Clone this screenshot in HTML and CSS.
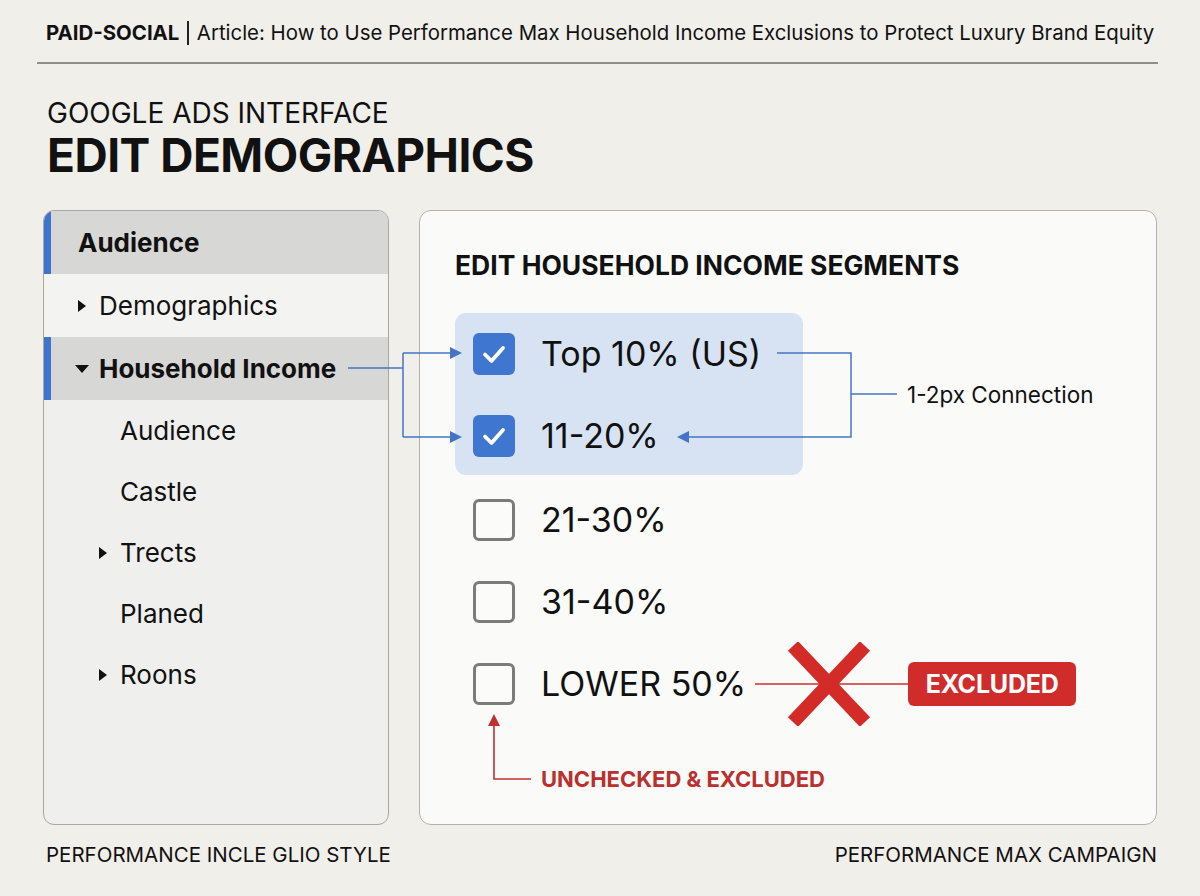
FILE: index.html
```html
<!DOCTYPE html>
<html lang="en">
<head>
    <meta charset="UTF-8">
    <meta name="viewport" content="width=device-width, initial-scale=1.0">
    <title>Edit Demographics</title>
    <link rel="stylesheet" href="styles.css">
</head>
<body>
    <div class="page">
        <div class="topline">
            <span class="channel">PAID-SOCIAL</span>
            <span class="divider"></span>
            <span class="article">Article: How to Use Performance Max Household Income Exclusions to Protect Luxury Brand Equity</span>
        </div>
        <div class="rule"></div>

        <div class="heading">
            <div class="kicker">GOOGLE ADS INTERFACE</div>
            <h1>EDIT DEMOGRAPHICS</h1>
        </div>

        <div class="workspace">
            <div class="sidebar">
                <div class="nav-row section">Audience</div>
                <div class="nav-row caret-row"><span class="caret right"></span>Demographics</div>
                <div class="nav-row section caret-row"><span class="caret down"></span>Household Income</div>
                <div class="nav-row sub"><span class="caret"></span>Audience</div>
                <div class="nav-row sub"><span class="caret"></span>Castle</div>
                <div class="nav-row sub"><span class="caret right"></span>Trects</div>
                <div class="nav-row sub"><span class="caret"></span>Planed</div>
                <div class="nav-row sub"><span class="caret right"></span>Roons</div>
            </div>

            <div class="panel">
                <h2>EDIT HOUSEHOLD INCOME SEGMENTS</h2>

                <div class="selected-group">
                    <div class="selected-box">
                        <div class="option">
                            <span class="check on"><svg viewBox="0 0 42 42"><path d="M12 21.5l6.5 6.5 11.5-13"/></svg></span>
                            <span class="option-label">Top 10% (US)</span>
                        </div>
                        <div class="option">
                            <span class="check on"><svg viewBox="0 0 42 42"><path d="M12 21.5l6.5 6.5 11.5-13"/></svg></span>
                            <span class="option-label">11-20%</span>
                        </div>
                    </div>
                    <div class="annotation">1-2px Connection</div>
                </div>

                <div class="option-list">
                    <div class="option">
                        <span class="check"></span>
                        <span class="option-label">21-30%</span>
                    </div>
                    <div class="option">
                        <span class="check"></span>
                        <span class="option-label">31-40%</span>
                    </div>
                    <div class="option">
                        <span class="check"></span>
                        <span class="option-label">LOWER 50%</span>
                        <svg class="strike" width="153" height="84" viewBox="0 0 153 84">
                            <line x1="0" y1="42" x2="153" y2="42" stroke="#c8302e" stroke-width="1.6"/>
                            <line x1="38" y1="4" x2="110" y2="80" stroke="#d32b28" stroke-width="14"/>
                            <line x1="110" y1="4" x2="38" y2="80" stroke="#d32b28" stroke-width="14"/>
                        </svg>
                        <span class="badge">EXCLUDED</span>
                    </div>
                </div>

                <div class="note">UNCHECKED &amp; EXCLUDED</div>
            </div>

            <!-- connector lines between the nav, the checkboxes and the notes -->
            <svg class="connectors" width="1114" height="615" viewBox="0 0 1114 615">
                <g fill="none" stroke="#4475c4" stroke-width="1.5">
                    <path d="M305 158H360"/>
                    <path d="M360 143V227"/>
                    <path d="M360 143H410"/>
                    <path d="M360 227H410"/>
                    <path d="M734 143H808V227H644"/>
                    <path d="M808 184H854"/>
                </g>
                <g fill="#4475c4">
                    <path d="M419 143l-12-6v12z"/>
                    <path d="M419 227l-12-6v12z"/>
                    <path d="M634 227l12-6v12z"/>
                </g>
                <path d="M451 513V569H488" fill="none" stroke="#c0302e" stroke-width="1.6"/>
                <path d="M451 504l-6 12h12z" fill="#c0302e"/>
            </svg>
        </div>

        <div class="footer">
            <span>PERFORMANCE INCLE GLIO STYLE</span>
            <span>PERFORMANCE MAX CAMPAIGN</span>
        </div>
    </div>
</body>
</html>
```

FILE: styles.css
```css
* {
    margin: 0;
    padding: 0;
    box-sizing: border-box;
}

body {
    background-color: #f1efea;
    color: #111;
    font-family: Inter, "Noto Sans", sans-serif;
}

.page {
    width: 1121px;
    margin-left: 37px;
    padding-top: 21px;
}

.topline {
    display: flex;
    align-items: center;
    padding-left: 9px;
    font-size: 20.4px;
    line-height: 24px;
    white-space: nowrap;
}

.channel {
    font-weight: 700;
}

.divider {
    width: 1.5px;
    height: 24px;
    background-color: #222;
    margin: 0 8px;
}

.rule {
    height: 2px;
    background-color: #8f8e8a;
    margin-top: 17px;
}

.heading {
    padding-left: 10px;
    margin-top: 33px;
}

.kicker {
    font-size: 28px;
    line-height: 32px;
}

h1 {
    font-size: 46px;
    line-height: 52px;
    font-weight: 700;
    letter-spacing: -0.5px;
}

.workspace {
    position: relative;
    display: flex;
    gap: 30px;
    width: 1114px;
    height: 615px;
    margin: 29px 0 0 6px;
}

/* left navigation */
.sidebar {
    width: 346px;
    background-color: #efefee;
    border: 1px solid #a8a8a6;
    border-radius: 11px;
    overflow: hidden;
}

.nav-row {
    display: flex;
    align-items: center;
    height: 63px;
    padding-left: 34px;
    font-size: 26px;
    background-color: #f3f3f2;
}

.nav-row.section {
    background-color: #d7d7d6;
    font-weight: 700;
    box-shadow: inset 7px 0 0 #3e74cc;
}

.nav-row.caret-row {
    padding-left: 31px;
}

.nav-row.sub {
    height: 61px;
    padding-left: 52px;
    background-color: transparent;
}

.caret {
    display: flex;
    align-items: center;
    justify-content: center;
    width: 14px;
    height: 14px;
    margin-right: 10px;
}

.caret.right::before {
    content: "";
    border-left: 8px solid #111;
    border-top: 6px solid transparent;
    border-bottom: 6px solid transparent;
}

.caret.down::before {
    content: "";
    border-top: 8px solid #111;
    border-left: 7px solid transparent;
    border-right: 7px solid transparent;
}

/* income segments panel */
.panel {
    flex: 1;
    background-color: #fafaf8;
    border: 1px solid #b2b1ae;
    border-radius: 12px;
    padding: 40px 0 0 35px;
}

h2 {
    font-size: 26.5px;
    line-height: 28px;
    font-weight: 700;
    white-space: nowrap;
}

.selected-group {
    display: flex;
    align-items: center;
    margin-top: 34px;
}

.selected-box {
    display: flex;
    flex-direction: column;
    gap: 40px;
    width: 348px;
    padding: 20px 18px 18px;
    background-color: #d7e3f3;
    border-radius: 11px;
}

.annotation {
    margin-left: 104px;
    font-size: 22.5px;
    white-space: nowrap;
}

.option-list {
    display: flex;
    flex-direction: column;
    gap: 40px;
    margin-top: 24px;
    padding-left: 18px;
}

.option {
    display: flex;
    align-items: center;
    height: 42px;
}

.check {
    width: 42px;
    height: 42px;
    flex-shrink: 0;
    border: 3px solid #7b7b7b;
    border-radius: 6px;
    background-color: #fbfbfa;
}

.check.on {
    border: none;
    background-color: #3f76cf;
}

.check svg {
    display: block;
    width: 42px;
    height: 42px;
    fill: none;
    stroke: #fff;
    stroke-width: 3.8;
    stroke-linecap: round;
    stroke-linejoin: round;
}

.option-label {
    margin-left: 26px;
    font-size: 34px;
    line-height: 42px;
    white-space: nowrap;
}

.strike {
    margin-left: 9px;
    flex-shrink: 0;
}

.badge {
    display: flex;
    align-items: center;
    justify-content: center;
    width: 168px;
    height: 44px;
    background-color: #cf2c2b;
    border-radius: 6px;
    color: #fff;
    font-size: 25px;
    font-weight: 700;
    letter-spacing: -0.2px;
}

.note {
    margin: 62px 0 0 86px;
    font-size: 22px;
    line-height: 24px;
    font-weight: 700;
    color: #b9302e;
    white-space: nowrap;
}

.connectors {
    position: absolute;
    left: 0;
    top: 0;
    pointer-events: none;
}

.footer {
    display: flex;
    justify-content: space-between;
    margin-top: 18px;
    padding: 0 1px 0 9px;
    font-size: 20.5px;
    line-height: 24px;
}
```
